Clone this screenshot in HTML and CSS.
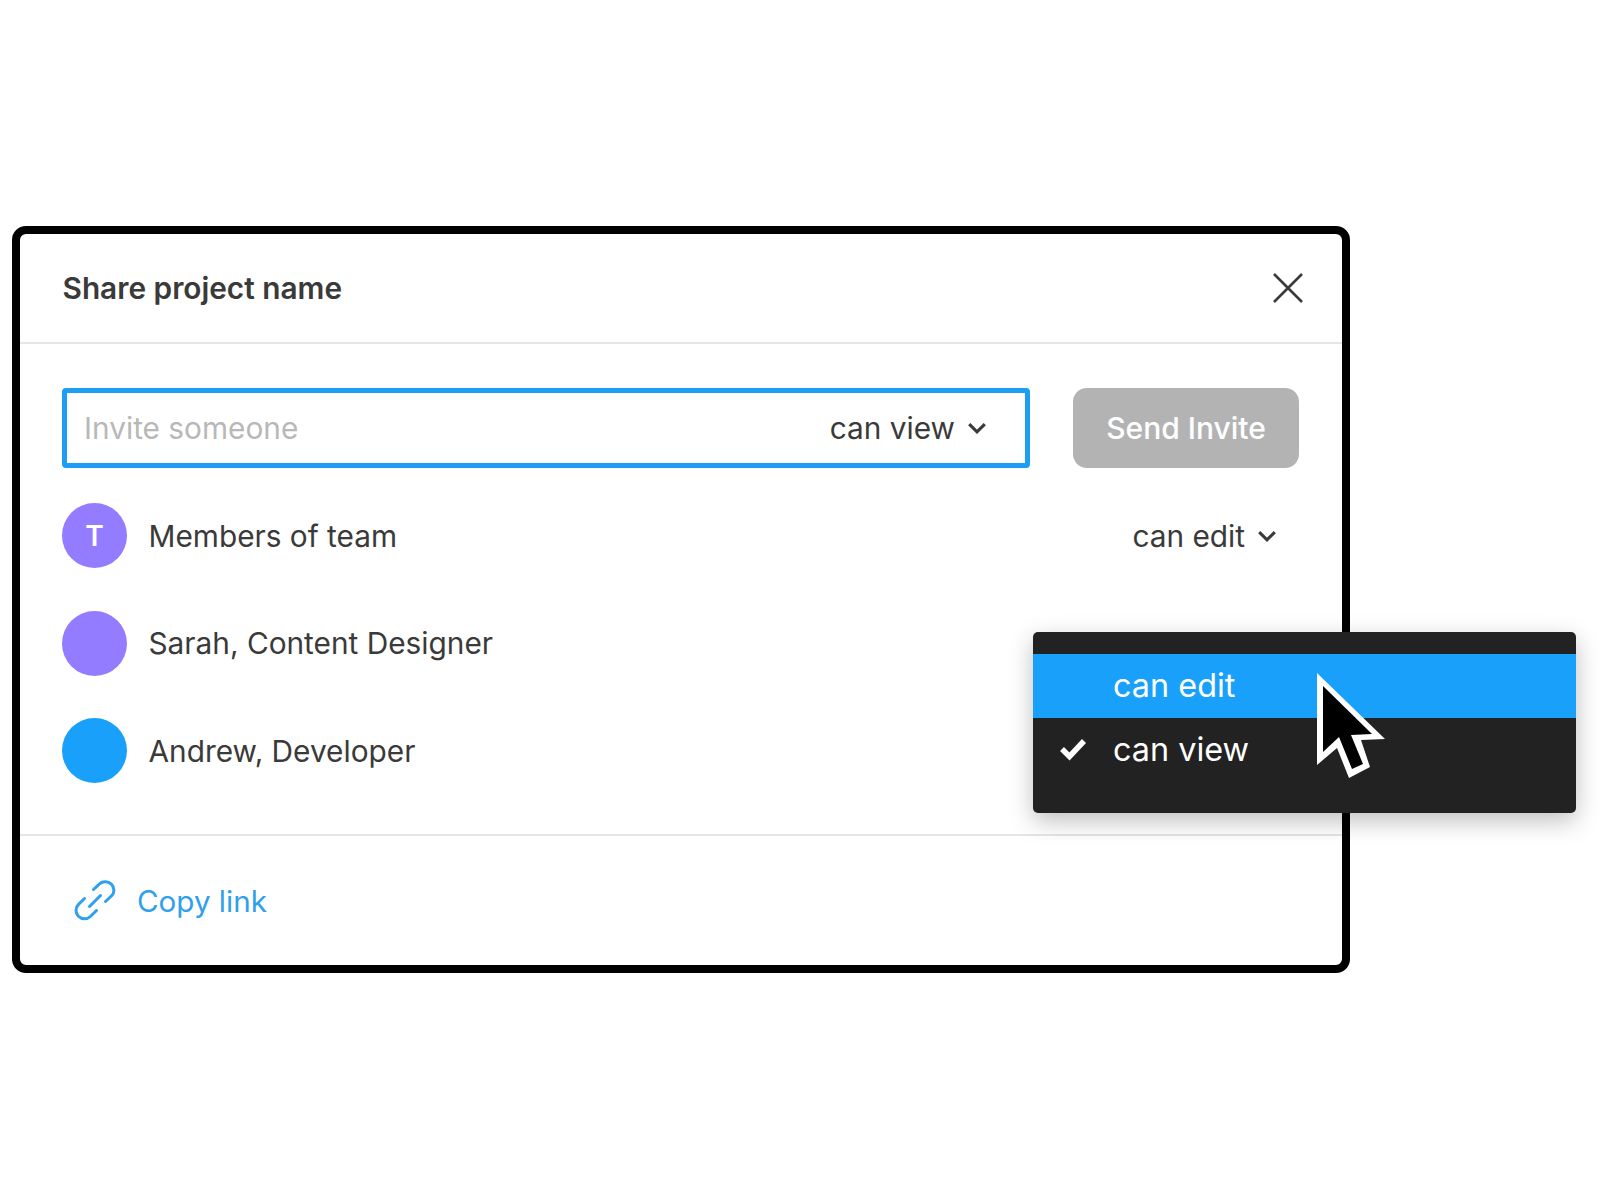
FILE: index.html
```html
<!DOCTYPE html>
<html lang="en">
<head>
<meta charset="utf-8">
<title>Share project name</title>
<link rel="stylesheet" href="styles.css">
</head>
<body>
<main class="stage">
  <section class="modal">
    <header class="modal-head">
      <h1 class="title">Share project name</h1>
      <svg class="close" viewBox="0 0 32 32" aria-hidden="true"><path d="M2 2 L30 30 M30 2 L2 30"/></svg>
    </header>
    <div class="modal-body">
      <div class="invite">
        <div class="invite-field">
          <span class="placeholder">Invite someone</span>
          <span class="perm">can view
            <svg class="chev" viewBox="0 0 18 12" aria-hidden="true"><path d="M2 2.5 L9 9.5 L16 2.5"/></svg>
          </span>
        </div>
        <div class="send">Send Invite</div>
      </div>
      <ul class="people">
        <li class="person">
          <span class="avatar purple">T</span>
          <span class="name">Members of team</span>
          <span class="perm perm-row">can edit
            <svg class="chev" viewBox="0 0 18 12" aria-hidden="true"><path d="M2 2.5 L9 9.5 L16 2.5"/></svg>
          </span>
        </li>
        <li class="person">
          <span class="avatar purple"></span>
          <span class="name">Sarah, Content Designer</span>
        </li>
        <li class="person">
          <span class="avatar blue"></span>
          <span class="name">Andrew, Developer</span>
        </li>
      </ul>
    </div>
    <footer class="modal-foot">
      <svg class="link-icon" viewBox="0 0 42 42" aria-hidden="true">
        <path d="M19.5 9.5 L25.5 3.8 C29 0.8 34 1 37.3 4.2 C40.6 7.5 40.8 12.5 37.6 15.8 L31.5 21.5"/>
        <path d="M10.5 18.5 L4.5 24.3 C1.2 27.6 1.2 32.8 4.4 36.2 C7.8 39.6 13 39.7 16.4 36.5 L22.5 30.5"/>
        <path d="M15.5 26.5 L26.5 15.5"/>
      </svg>
      <span class="copy">Copy link</span>
    </footer>
    <div class="menu">
      <div class="menu-item active"><span class="menu-check"></span>can edit</div>
      <div class="menu-item">
        <span class="menu-check"><svg class="tick" viewBox="0 0 28 24" aria-hidden="true"><path d="M3 12 L10.5 19.5 L25 4"/></svg></span>can view
      </div>
      <svg class="cursor" viewBox="0 0 85 120" aria-hidden="true">
        <path class="cursor-edge" d="M7 8 L75 74 L51 75 L60 102 L39 113 L27 83 L7 100 Z"/>
        <path class="cursor-fill" d="M13 21 L62 69 L41 70 L53 99 L42 104 L29 72 L13 87 Z"/>
      </svg>
    </div>
  </section>
</main>
</body>
</html>
```
FILE: styles.css
```css
* { box-sizing: border-box; }
html, body { margin: 0; padding: 0; background: #fff; }
body { font-family: Inter, "Liberation Sans", sans-serif; color: #3a3a3a; }
.stage { width: 1600px; height: 1200px; padding: 226px 0 0 12px; }
.modal {
  position: relative;
  width: 1338px;
  height: 747px;
  border: 8px solid #000;
  border-radius: 14px;
  background: #fff;
  display: flex;
  flex-direction: column;
}
.modal-head {
  height: 110px;
  padding: 0 38px 0 42.5px;
  border-bottom: 2px solid #e6e6e6;
  display: flex;
  align-items: center;
  justify-content: space-between;
}
.title { margin: 0; font-size: 29.8px; font-weight: 600; color: #3a3a3a; }
.close { width: 32px; height: 32px; fill: none; stroke: #3a3a3a; stroke-width: 2.6; }
.modal-body { flex: 1; padding: 44px 43px 0 42px; }
.invite { display: flex; gap: 43px; height: 80px; }
.invite-field {
  flex: 1;
  border: 5px solid #1e9df5;
  border-radius: 4px;
  padding: 0 38px 0 17px;
  display: flex;
  align-items: center;
  justify-content: space-between;
  font-size: 29.8px;
}
.placeholder { color: #b8b8b8; }
.perm { display: flex; align-items: center; gap: 12px; color: #3a3a3a; font-size: 29.8px; }
.chev { width: 20px; height: 14px; fill: none; stroke: #3a3a3a; stroke-width: 2.8; }
.send {
  width: 226px;
  border-radius: 14px;
  background: #b3b3b3;
  color: #fff;
  font-size: 30px;
  font-weight: 500;
  display: flex;
  align-items: center;
  justify-content: center;
}
.people { list-style: none; margin: 35px 0 0; padding: 0; display: flex; flex-direction: column; gap: 42.5px; }
.person { height: 65px; display: flex; align-items: center; gap: 21.5px; font-size: 29.8px; }
.avatar {
  width: 65px;
  height: 65px;
  border-radius: 50%;
  color: #fff;
  font-weight: 600;
  font-size: 28px;
  display: flex;
  align-items: center;
  justify-content: center;
  flex: none;
}
.purple { background: #937cff; }
.blue { background: #18a0fb; }
.perm-row { margin-left: auto; margin-right: 22px; }
.modal-foot {
  height: 131px;
  border-top: 2px solid #e6e6e6;
  padding: 0 0 0 54px;
  display: flex;
  align-items: center;
  gap: 21px;
}
.link-icon { width: 42px; height: 42px; fill: none; stroke: #2ea0ee; stroke-width: 3; stroke-linecap: round; }
.copy { color: #2ea0ee; font-size: 29.6px; }
.menu {
  position: absolute;
  left: 1013px;
  top: 398px;
  width: 543px;
  height: 181px;
  padding: 22px 0;
  border-radius: 5px;
  background: #222;
  box-shadow: 0 8px 24px rgba(0,0,0,.25);
  color: #fff;
  font-size: 32.4px;
}
.menu-item { height: 64px; display: flex; align-items: center; padding: 0 0 2px 26px; }
.menu-item.active { background: #18a0fb; }
.menu-check { width: 54px; flex: none; display: flex; align-items: center; }
.tick { width: 28px; height: 24px; fill: none; stroke: #fff; stroke-width: 5.5; }
.cursor { position: absolute; left: 277px; top: 33px; width: 85px; height: 120px; }
.cursor-edge { fill: #fff; }
.cursor-fill { fill: #000; }
```
